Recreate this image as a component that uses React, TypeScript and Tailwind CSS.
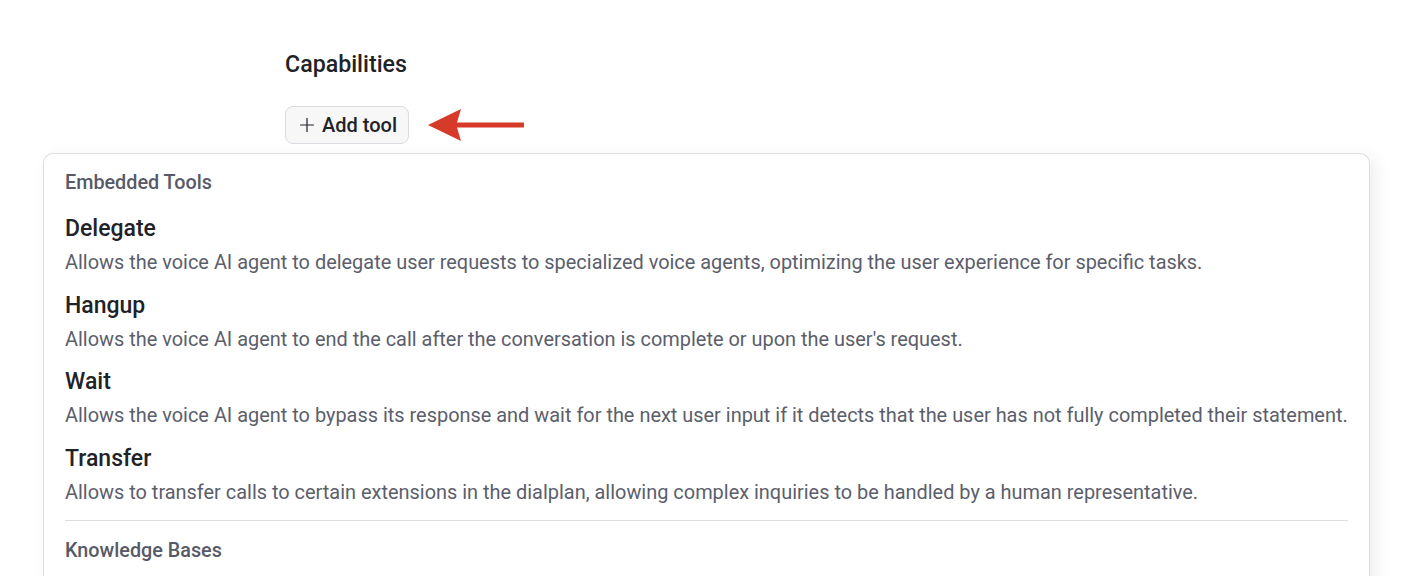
import React from 'react';
import { Plus } from 'lucide-react';

const TOOLS = [
    {
        name: 'Delegate',
        description: 'Allows the voice AI agent to delegate user requests to specialized voice agents, optimizing the user experience for specific tasks.',
    },
    {
        name: 'Hangup',
        description: "Allows the voice AI agent to end the call after the conversation is complete or upon the user's request.",
    },
    {
        name: 'Wait',
        description: 'Allows the voice AI agent to bypass its response and wait for the next user input if it detects that the user has not fully completed their statement.',
    },
    {
        name: 'Transfer',
        description: 'Allows to transfer calls to certain extensions in the dialplan, allowing complex inquiries to be handled by a human representative.',
    },
];

export default function App() {
    return (
        <div className="h-[576px] w-[1424px] overflow-hidden bg-white font-['Roboto',sans-serif]">
            {/* CAPABILITIES HEADER */}
            <div className="pl-[285px] pt-[50px]">
                <h2 className="text-[23.2px] leading-[28px] font-medium text-[#1f2328]">Capabilities</h2>
                <div className="mt-[28px] flex items-center">
                    <button className="flex h-[38px] w-[124px] items-center gap-[4px] rounded-[8px] border border-[#d9dbe0] bg-[#f7f7f8] pl-[10px] text-[20px] font-medium text-[#1f2328]">
                        <Plus className="h-[22px] w-[22px]" strokeWidth={1.35} />
                        Add tool
                    </button>
                    {/* annotation arrow */}
                    <svg className="ml-[19px]" width="97" height="36" viewBox="0 0 97 36">
                        <path d="M0 18 L33 2 L29 15.5 L96 15.5 L96 20.5 L29 20.5 L33 34 Z" fill="#d63a28" />
                    </svg>
                </div>
            </div>

            {/* DROPDOWN PANEL */}
            <div className="mx-[43px] mt-[9px] w-[1327px] rounded-t-[10px] border border-b-0 border-[#dcdde1] bg-white px-[21px] pt-[17px] pb-[60px] shadow-[6px_4px_18px_rgba(0,0,0,0.07)]">
                <div className="text-[19.8px] leading-[24px] font-medium text-[#575a66]">Embedded Tools</div>
                <div className="mt-[19px] flex flex-col gap-[13.5px]">
                    {TOOLS.map((tool) => (
                        <div key={tool.name}>
                            <div className="text-[23px] leading-[30px] font-medium text-[#1f2328]">{tool.name}</div>
                            <p className="mt-[5px] whitespace-nowrap text-[19.93px] leading-[28px] text-[#5b5e6b]">{tool.description}</p>
                        </div>
                    ))}
                </div>
                <div className="mt-[13.5px] h-px w-full bg-[#dcdde1]" />
                <div className="mt-[18px] text-[19.8px] leading-[24px] font-medium text-[#575a66]">Knowledge Bases</div>
            </div>
        </div>
    );
}
